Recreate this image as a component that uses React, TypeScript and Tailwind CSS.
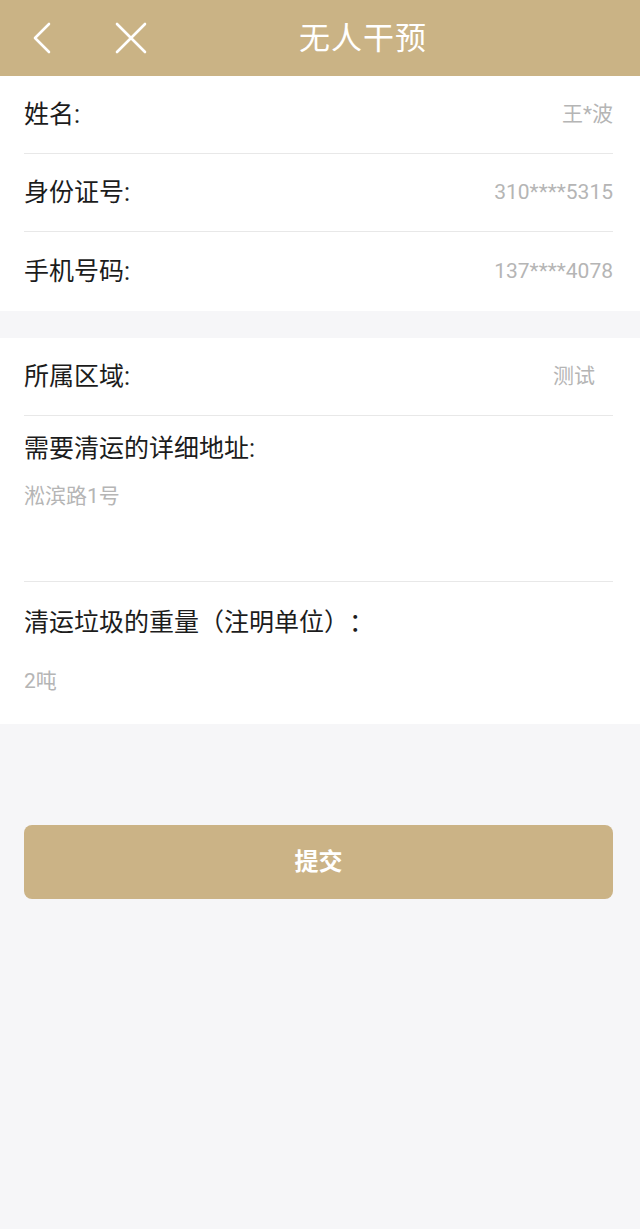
import React from 'react';

const font = "font-['Roboto','Noto_Sans_CJK_SC',sans-serif]";

const Row = ({ label, value, last, valueClass = '' }: { label: string; value: string; last?: boolean; valueClass?: string }) => (
  <div className={`flex items-center justify-between ${last ? 'h-[79px]' : 'h-[78px] border-b border-[#e8e8e8]'}`}>
    <span className="text-[25px] text-[#1c1c1c]">{label}</span>
    <span className={`text-[21px] text-[#b5b5b5] ${valueClass}`}>{value}</span>
  </div>
);

export default function App() {
  return (
    <div className={`min-h-screen bg-[#f6f6f8] ${font}`}>
      {/* Header */}
      <div className="h-[76px] bg-[#cab385] flex items-center">
        <svg className="ml-[31px]" width="22" height="32" viewBox="0 0 22 32" fill="none">
          <path d="M18 2 L4 16 L18 30" stroke="white" strokeWidth="2.6" strokeLinecap="round" strokeLinejoin="round" />
        </svg>
        <svg className="ml-[61px]" width="34" height="32" viewBox="0 0 34 32" fill="none">
          <path d="M3 2 L31 30 M31 2 L3 30" stroke="white" strokeWidth="2.6" strokeLinecap="round" />
        </svg>
        <h1 className="ml-[151px] text-[31px] text-white tracking-[1px] leading-none">无人干预</h1>
      </div>

      {/* Personal info */}
      <div className="bg-white pl-[24px] pr-[27px]">
        <Row label="姓名:" value="王*波" />
        <Row label="身份证号:" value="310****5315" />
        <Row label="手机号码:" value="137****4078" last />
      </div>

      {/* Request info */}
      <div className="bg-white pl-[24px] pr-[27px] mt-[27px]">
        <Row label="所属区域:" value="测试" valueClass="mr-[18px]" />
        <div className="h-[166px] border-b border-[#e8e8e8] pt-[17px]">
          <div className="text-[25px] leading-[32px] text-[#1c1c1c]">需要清运的详细地址:</div>
          <div className="mt-[16px] text-[21px] leading-[30px] text-[#b5b5b5]">淞滨路1号</div>
        </div>
        <div className="h-[142px] pt-[22px]">
          <div className="font-['Noto_Sans_CJK_SC',sans-serif] [text-spacing-trim:space-all] text-[25px] leading-[32px] text-[#1c1c1c]">清运垃圾的重量（注明单位）：</div>
          <div className="mt-[30px] text-[21px] leading-[30px] text-[#b5b5b5]">2吨</div>
        </div>
      </div>

      {/* Submit */}
      <div className="pl-[24px] pr-[27px] pt-[101px]">
        <button className="w-full h-[74px] rounded-[8px] bg-[#cbb386] text-white text-[24px] font-bold">提交</button>
      </div>
    </div>
  );
}
